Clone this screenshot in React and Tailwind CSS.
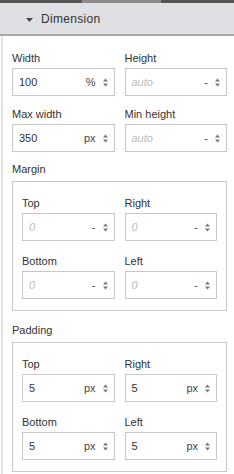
import React from "react";

const Spinner = () => (
  <svg width="7" height="11" viewBox="0 0 7 11" className="shrink-0">
    <path d="M3.5 1.5 L6 4.5 H1 Z" fill="#777" />
    <path d="M3.5 9.5 L6 6.5 H1 Z" fill="#777" />
  </svg>
);

const NumInput = ({ value, unit, placeholder }) => (
  <div className="flex items-center h-[28px] border border-[#c8c8c8] bg-white pl-[6px] pr-[5px]">
    {value ? (
      <span className="flex-1 text-[11px] text-[#333]">{value}</span>
    ) : (
      <span className="flex-1 text-[11px] italic text-[#bbb]">{placeholder}</span>
    )}
    <span className="text-[11px] text-[#444] mr-[6px]">{unit}</span>
    <Spinner />
  </div>
);

const Field = ({ label, ...rest }) => (
  <div className="flex flex-col">
    <label className="text-[11px] leading-[14px] text-[#333] mb-[3px]">{label}</label>
    <NumInput {...rest} />
  </div>
);

const Group = ({ label, fields }) => (
  <div className="flex flex-col">
    <div className="text-[11px] leading-[14px] text-[#333] mb-[5px]">{label}</div>
    <div className="border border-[#c8c8c8] pt-[14px] pb-[11px] px-[9px] grid grid-cols-2 gap-x-[10px] gap-y-[13px]">
      {fields.map((f) => (
        <Field key={f.label} {...f} />
      ))}
    </div>
  </div>
);

export default function App() {
  const margin = [
    { label: "Top", placeholder: "0", unit: "-" },
    { label: "Right", placeholder: "0", unit: "-" },
    { label: "Bottom", placeholder: "0", unit: "-" },
    { label: "Left", placeholder: "0", unit: "-" },
  ];
  const padding = [
    { label: "Top", value: "5", unit: "px" },
    { label: "Right", value: "5", unit: "px" },
    { label: "Bottom", value: "5", unit: "px" },
    { label: "Left", value: "5", unit: "px" },
  ];

  return (
    <div
      className="w-[234px] h-[474px] overflow-hidden bg-white"
      style={{ fontFamily: '"Liberation Sans", Arial, sans-serif' }}
    >
      {/* top strip */}
      <div className="h-[3px] bg-[#555] flex">
        <div className="w-[82px]" />
        <div className="w-[79px] bg-[#8a8a8a]" />
      </div>

      {/* section header */}
      <div className="h-[33px] bg-[#dfe0e4] border-b-2 border-[#a9a9a9] flex items-center pl-[26px]">
        <svg width="7" height="4" viewBox="0 0 7 4" className="mr-[8px] mt-[2px]">
          <path d="M0 0 H7 L3.5 4 Z" fill="#444" />
        </svg>
        <span className="text-[12px] tracking-[0.3px] text-[#333]">Dimension</span>
      </div>

      <div className="ml-[1px] border-l-2 border-[#e2e2e2] h-full pl-[9px] pr-[7px] pt-[15px] flex flex-col">
        <div className="grid grid-cols-2 gap-x-[10px] gap-y-[11px]">
          <Field label="Width" value="100" unit="%" />
          <Field label="Height" placeholder="auto" unit="-" />
          <Field label="Max width" value="350" unit="px" />
          <Field label="Min height" placeholder="auto" unit="-" />
        </div>
        <div className="mt-[10px]">
          <Group label="Margin" fields={margin} />
        </div>
        <div className="mt-[12px]">
          <Group label="Padding" fields={padding} />
        </div>
      </div>
    </div>
  );
}
